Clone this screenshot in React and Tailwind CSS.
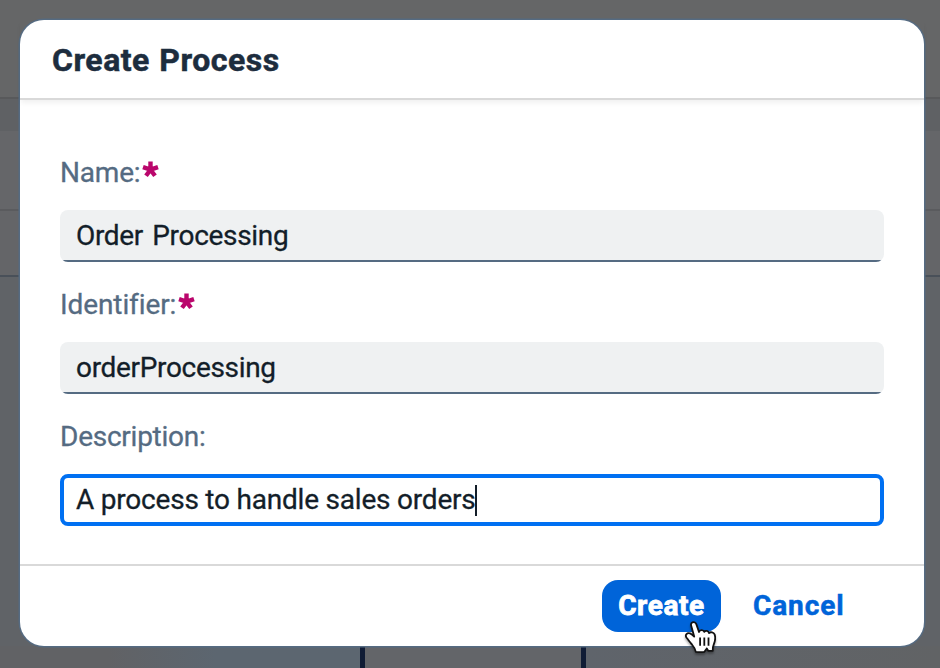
import React from "react";

function Backdrop() {
  return (
    <div className="absolute inset-0 flex flex-col bg-[#606367]">
      <div className="h-[97px] bg-[#656667]" />
      <div className="h-[2px] bg-[#58595b]" />
      <div className="h-8 bg-[#5f6164]" />
      <div className="h-[78px] bg-[#656669]" />
      <div className="h-[2px] bg-[#5a5b5e]" />
      <div className="h-16 bg-[#646568]" />
      <div className="h-[2px] bg-[#495059]" />
      <div className="flex-1" />
      <div className="flex h-[22px]">
        <div className="w-[360px] bg-linear-to-r from-[#616265] from-30% to-[#5c6670] to-60%" />
        <div className="w-[5px] bg-[#101c35]" />
        <div className="w-[216px] bg-[#636569]" />
        <div className="w-[5px] bg-[#101c35]" />
        <div className="flex-1 bg-linear-to-r from-[#5f646b] to-[#616365]" />
      </div>
    </div>
  );
}

function Label({ text, required, spacing }) {
  return (
    <div className="flex h-[54px] items-start text-[28px] leading-[32px] text-[#556b82] [-webkit-text-stroke:0.3px_#556b82]">
      <span className={spacing}>{text}</span>
      {required && (
        <svg className="ml-[2px] mt-1" width="17" height="17" viewBox="0 0 17 17" stroke="#ba066c" strokeWidth="4.4">
          <path d="M8.5 8.7V.5M8.5 8.7L1 6.2M8.5 8.7L16 6.2M8.5 8.7L4 14.8M8.5 8.7L13 14.8" />
        </svg>
      )}
    </div>
  );
}

function Field({ value, spacing }) {
  return (
    <div className="mb-[26px] flex h-[52px] flex-col overflow-hidden rounded-lg bg-[#eff1f2] text-[28px] leading-[52px] text-[#131e29] [-webkit-text-stroke:0.3px_#131e29]">
      <div className="h-[50px] px-4">
        <span className={spacing}>{value}</span>
      </div>
      <div className="h-[2px] bg-[#556b82]" />
    </div>
  );
}

function HandCursor() {
  return (
    <svg
      className="absolute left-[82px] top-[39px] drop-shadow-[0_2px_1px_rgba(0,0,0,0.35)]"
      width="36" height="37" viewBox="0 0 36 37"
    >
      <path
        d="M8.4 3.4C10.4 2.6 11.8 3.6 12.4 5.4L15 13c.6-2.5 4.6-2.6 5.2-.1 1.2-1.7 4.3-1.2 4.8 1.1 1.6-1.4 4.7-.6 5.6 1.4.9 2.6.5 7-.9 10.2-1 2.2-1 3.6-.9 6.2h-4.6l-1.4-2.4-2.4 3.4c-2.8.5-5.6.3-8.6 0-.6-3.6-2.4-5.4-4.4-7.9-1.8-2.2-3.2-4.2-5-6.4-1.6-2.6.7-5.2 3.6-4.1 1.6.6 2.8 1.8 4.2 3.2L7.2 6.8C6.8 5.4 7 4 8.4 3.4Z"
        fill="#fff" stroke="#111" strokeWidth="1.8" strokeLinejoin="round"
      />
      <path d="M16.1 18.6v8.2M20.3 18.6v8.2M24.5 18.6v8.2" fill="none" stroke="#111" strokeWidth="1.8" />
    </svg>
  );
}

export default function App() {
  return (
    <div className="relative h-[668px] w-[940px] overflow-hidden pl-5 pt-5 font-['Roboto',sans-serif]">
      <Backdrop />
      <div className="relative flex h-[626px] w-[904px] flex-col rounded-[24px] bg-white shadow-[0_0_0_1.5px_#556b82]">
        <header className="flex h-20 items-center border-b-2 border-[#d9d9d9] px-8 pt-[2px] shadow-[0_4px_5px_-1px_rgba(0,0,0,0.06)]">
          <h1 className="text-[32px] font-bold leading-10 tracking-[0.5px] [word-spacing:1px] text-[#1d2d3e] [-webkit-text-stroke:0.5px_#1d2d3e]">Create Process</h1>
        </header>
        <main className="h-[464px] px-10 pt-[57px]">
          <Label text="Name:" required spacing="tracking-[-0.2px]" />
          <div className="-mt-px">
            <Field value="Order Processing" spacing="tracking-[-0.32px] [word-spacing:2.6px]" />
          </div>
          <div className="pt-px">
            <Label text="Identifier:" required spacing="tracking-[-0.1px]" />
          </div>
          <div className="-mt-px">
            <Field value="orderProcessing" spacing="tracking-[-0.32px]" />
          </div>
          <div className="pt-px">
            <Label text="Description:" spacing="tracking-[-0.25px]" />
          </div>
          <div className="-mt-px flex h-[52px] items-center rounded-lg border-4 border-[#0070f2] px-3 text-[28px] leading-8 text-[#131e29] [-webkit-text-stroke:0.3px_#131e29]">
            <span className="tracking-[-0.21px]">A process to handle sales orders</span>
            <span className="-ml-px h-[31px] w-[2px] bg-[#131e29]" />
          </div>
        </main>
        <footer className="flex h-[82px] items-start justify-end border-t-2 border-[#d9d9d9] pr-[60px] pt-[14px] text-[28px] font-bold">
          <button className="relative flex h-[52px] w-[119px] items-center justify-center rounded-2xl bg-[#0064d9] text-white">
            <span className="tracking-[0.6px] [-webkit-text-stroke:0.8px_white]">Create</span>
            <HandCursor />
          </button>
          <button className="ml-8 flex h-[52px] w-[111px] items-center text-[#0064d9]">
            <span className="tracking-[0.9px] [-webkit-text-stroke:0.5px_#0064d9]">Cancel</span>
          </button>
        </footer>
      </div>
    </div>
  );
}
